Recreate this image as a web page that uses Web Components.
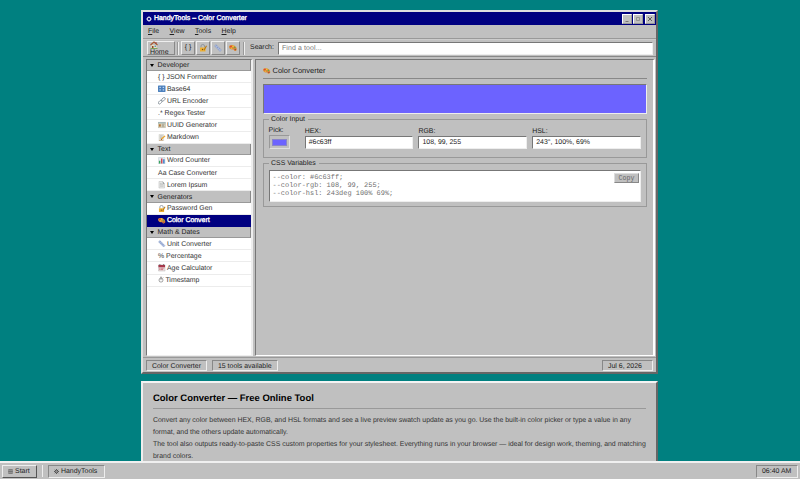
<!DOCTYPE html>
<html lang="en">
<head>
<meta charset="utf-8">
<title>HandyTools – Color Converter</title>
<style>
html, body {
  margin: 0;
  height: 100%;
  overflow: hidden;
}
body {
  background: #008080;
  color: #222;
  font: 6.95px/8px "Liberation Sans", Arial, sans-serif;
  text-rendering: geometricPrecision;
}
</style>
</head>
<body>
<handy-desktop>
  <tool-window>
    <color-converter></color-converter>
  </tool-window>
  <about-card heading="Color Converter — Free Online Tool">
    <p>Convert any color between HEX, RGB, and HSL formats and see a live preview swatch update as you go. Use the built-in color picker or type a value in any<br>format, and the others update automatically.</p>
    <p>The tool also outputs ready-to-paste CSS custom properties for your stylesheet. Everything runs in your browser — ideal for design work, theming, and matching<br>brand colors.</p>
  </about-card>
  <task-bar slot="taskbar"></task-bar>
</handy-desktop>

<script>
const icons = {
  gear: `<circle cx="8" cy="8" r="4.500" fill="none" stroke="currentColor" stroke-width="2.200"/><circle cx="8" cy="8" r="1.200" fill="currentColor"/><path d="M8 0v3M8 13v3M0 8h3M13 8h3M2.500 2.500l2 2M11.500 11.500l2 2M13.500 2.500l-2 2M4.500 11.500l-2 2" stroke="currentColor" stroke-width="1.800"/>`,
  home: `<path d="M3 8h10v7H3z" fill="#f3dfba"/><path d="M1 8l7-6 7 6" fill="none" stroke="#a85b32" stroke-width="2.400"/><path d="M11 2h2v4h-2z" fill="#944"/><path d="M4 10h3v5H4z" fill="#8b4b2b"/><path d="M9 9h3v3H9z" fill="#4a9ac8"/><path d="M1 15h14" stroke="#6a9b45" stroke-width="1.600"/>`,
  lock: `<path d="M4 7V4q0-3 3.500-3T11 4v3" fill="none" stroke="#8a9298" stroke-width="1.800"/><path d="M2 7h11v8H2z" fill="#edb035"/><path d="M9 12l5-9 2 1-5 9z" fill="#b87912"/><circle cx="7" cy="11" r="1.300" fill="#76511a"/>`,
  ruler: `<path d="M1 4l3-3 11 11-3 3z" fill="#a9b9df" stroke="#7b8fbd" stroke-width=".7"/><path d="M5 3L3.500 4.500M8 6L6.500 7.500M11 9l-1.500 1.500" stroke="#546b9e"/>`,
  palette: `<path d="M0 5C1 1 9 1 13 5c4 4 3 9-1 9-3 0-1-3-4-3-5 1-8-2-8-6z" fill="#d98a3a"/><circle cx="4" cy="5" r="1.700" fill="#e8362f"/><circle cx="8" cy="4.500" r="1.600" fill="#f7d737"/><circle cx="11.500" cy="7" r="1.500" fill="#5fae47"/><circle cx="5" cy="8.500" r="1.500" fill="#e9c13b"/><circle cx="12.500" cy="11" r="1.500" fill="#a4413c"/>`,
  numbers: `<rect x="0" y="1" width="16" height="14" rx="1" fill="#4d81bd"/><path d="M3 5h3M10 5h3M3 10.500h3M10 10.500h3" stroke="#e4f0ff" stroke-width="2"/>`,
  link: `<g fill="none" stroke="#7f8b94" stroke-width="1.800"><rect x="7" y="2.500" width="9" height="5" rx="2.500" transform="rotate(-45 11.500 5)"/><rect x="0" y="8.500" width="9" height="5" rx="2.500" transform="rotate(-45 4.500 11)"/></g>`,
  card: `<path d="M0 3h16v11H0z" fill="#ded8bd" stroke="#9e9b88" stroke-width=".8"/><path d="M0 3h16v2H0z" fill="#89a9b7"/><path d="M2 7h4v5H2z" fill="#b3763c"/><path d="M8 7h6M8 9.500h5M8 12h6" stroke="#777"/>`,
  memo: `<path d="M2 1h10v14H2z" fill="#e5e5df" stroke="#b7b7ae" stroke-width=".6"/><path d="M4 4h6M4 7h5M4 10h3" stroke="#999"/><path d="M6 13l1-4 7-6 2 2-7 6z" fill="#eaa32c"/><path d="M6 13l1-3 2 2z" fill="#85472b"/><path d="M2 14h9v1H2z" fill="#c58b45"/>`,
  chart: `<path d="M1 1h14v14H1z" fill="#e4ebef" stroke="#a9b8c2" stroke-width=".7"/><path d="M2 8h3v6H2z" fill="#35a35b"/><path d="M6.500 3h3v11h-3z" fill="#cf4352"/><path d="M11 5h3v9h-3z" fill="#337dcc"/>`,
  page: `<path d="M2 1h8l4 5v9H2z" fill="#e9ebe9" stroke="#999" stroke-width=".7"/><path d="M10 1v5h4z" fill="#8b9295"/><path d="M4 5h4M4 8h8M4 11h8" stroke="#999"/>`,
  calendar: `<path d="M1 2h14v13H1z" fill="#eee3e3" stroke="#999" stroke-width=".7"/><path d="M1 2h14v5H1z" fill="#a9374a"/><path d="M4 0v3M12 0v3" stroke="#555" stroke-width="1.500"/><path d="M3 9h10M3 12h8" stroke="#bc3e50" stroke-width="1.800" stroke-dasharray="2 1"/>`,
  timer: `<circle cx="8" cy="9" r="5.300" fill="none" stroke="#444" stroke-width="1.300"/><path d="M8 9V5M6 1h4M8 1v3M12 4l2-2" stroke="#444" stroke-width="1.300"/>`,
  start: `<path d="M1.500 1.500h13v13h-13zM8 1v14M1 8h14M4.700 1v14M11.300 1v14" fill="none" stroke="#444" stroke-width="1.200"/>`
};

class ToolIcon extends HTMLElement {
  constructor() {
    super();
    this.attachShadow({ mode: "open" });
    this.shadowRoot.innerHTML = `
      <style>
        :host { display: inline-block; width: 8px; height: 8px; flex: none; }
        svg { display: block; width: 100%; height: 100%; }
      </style>
      <svg viewBox="0 0 16 16">${icons[this.getAttribute("name")]}</svg>`;
  }
}
customElements.define("tool-icon", ToolIcon);

class HandyDesktop extends HTMLElement {
  constructor() {
    super();
    this.attachShadow({ mode: "open" });
    this.shadowRoot.innerHTML = `
      <style>
        :host { display: flex; flex-direction: column; height: 479px; overflow: hidden; }
        main {
          flex: 1; min-height: 0; overflow: hidden;
          display: flex; flex-direction: column; align-items: center; gap: 7px;
          padding-top: 10px;
        }
      </style>
      <main><slot></slot></main>
      <slot name="taskbar"></slot>`;
  }
}
customElements.define("handy-desktop", HandyDesktop);

class SideGroup extends HTMLElement {
  constructor() {
    super();
    this.attachShadow({ mode: "open" });
    this.shadowRoot.innerHTML = `
      <style>
        :host { display: block; }
        header {
          box-sizing: border-box; height: 11.300px; padding-left: 3px;
          display: flex; align-items: center; gap: 3.600px;
          background: #c0c0c0; border-bottom: 1px solid #999; border-right: 1px solid #888;
        }
        i { border: 2px solid transparent; border-top: 3.500px solid #000; border-bottom: 0; }
        span { padding-top: 2px; }
      </style>
      <header><i></i><span>${this.getAttribute("label")}</span></header>
      <slot></slot>`;
  }
}
customElements.define("side-group", SideGroup);

class SideItem extends HTMLElement {
  constructor() {
    super();
    this.attachShadow({ mode: "open" });
    const icon = this.getAttribute("icon");
    this.shadowRoot.innerHTML = `
      <style>
        :host {
          box-sizing: border-box; height: 12.100px; padding-left: 11px;
          display: flex; align-items: center; gap: 1.400px;
          border-bottom: 1px solid #ececec; color: #333; white-space: nowrap;
        }
        :host([active]) { background: #000080; border-color: #000080; color: #fff; -webkit-text-stroke: .35px #fff; }
        tool-icon { width: 7.500px; height: 7.500px; }
        tool-icon[name="timer"] { width: 6px; }
        span { padding-top: 1.500px; }
      </style>
      ${icon ? `<tool-icon name="${icon}"></tool-icon>` : ""}<span><slot></slot></span>`;
  }
}
customElements.define("side-item", SideItem);

class ToolWindow extends HTMLElement {
  constructor() {
    super();
    this.attachShadow({ mode: "open" });
    this.shadowRoot.innerHTML = `
      <style>
        :host {
          box-sizing: border-box; flex: none; width: 517px; height: 364px;
          display: flex; flex-direction: column; background: #c0c0c0;
          border: 2px solid; border-color: #dfdfdf #666 #666 #dfdfdf;
          margin-right: 1px;
        }
        .title {
          height: 13px; padding: 0 1px 0 3px; background: #000080; color: #fff;
          display: flex; align-items: center; gap: 2px;
        }
        .title tool-icon { width: 6px; height: 6px; }
        .title b { flex: 1; font-weight: normal; -webkit-text-stroke: .35px #fff; }
        .ctl {
          box-sizing: border-box; width: 10px; height: 10px; margin-left: -.300px;
          background: #c0c0c0; border: 1px solid; border-color: #fff #999 #999 #fff;
        }
        .ctl svg { display: block; width: 8px; height: 8px; }
        .menu {
          box-sizing: border-box; height: 14px; padding-left: 5px; border-bottom: 1px solid #999;
          display: flex; align-items: center; gap: 10.400px;
        }
        .tools {
          box-sizing: border-box; height: 18px; padding: 0 3px 0 4px; border-bottom: 1px solid #888;
          border-top: 1px solid #ccc;
          display: flex; align-items: center;
        }
        .btn {
          box-sizing: border-box; width: 14px; height: 14px; margin-right: 1px;
          display: flex; align-items: center; justify-content: center;
          border: 1px solid; border-color: #eee #888 #888 #eee;
        }
        .home { width: 28px; flex-direction: column; align-items: flex-start; justify-content: flex-start; padding-left: 2px; margin: 0; }
        .home tool-icon { flex: none; margin-top: -1px; }
        .home span { line-height: 8px; }
        .sep { width: 1px; height: 13px; background: #999; border-right: 1px solid #eee; margin: 0 2px; }
        .search {
          box-sizing: border-box; flex: 1; height: 13px; margin-left: 4px; padding: 1px 3px 0; background: #fff;
          border: 1px solid; border-color: #777 #eee #eee #777; line-height: 10px; color: #777; letter-spacing: .13px;
        }
        .body { flex: 1; min-height: 0; display: flex; gap: 2px; padding: 2px 1px 1px 3px; }
        nav {
          box-sizing: border-box; flex: none; width: 107px; background: #fff;
          border: 1px solid; border-color: #777 #eee #eee #777; border-right-width: 2px;
        }
        section {
          box-sizing: border-box; flex: 1; min-width: 0; padding: 4px 6px 0 7px;
          border: 1px solid; border-color: #777 #fff #fff #777; border-width: 1px 2px 1px 1px;
        }
        footer {
          box-sizing: border-box; height: 15px; padding: 1px 3px 1px 3px; border-top: 1px solid #999;
          display: flex; align-items: center; gap: 5px;
        }
        footer span {
          box-sizing: border-box; height: 11px; padding: 0 5px; line-height: 11px;
          border: 1px solid; border-color: #888 #eee #eee #888;
        }
        footer span:last-child { width: 51px; margin-left: auto; }
      </style>
      <div class="title">
        <tool-icon name="gear"></tool-icon><b>HandyTools – Color Converter</b>
        <span class="ctl"><svg viewBox="0 0 8 8"><path d="M2.500 6.500h3" stroke="#777"/></svg></span>
        <span class="ctl"><svg viewBox="0 0 8 8"><path d="M2.500 2.500h3v3h-3z" fill="none" stroke="#888" stroke-width=".8"/></svg></span>
        <span class="ctl"><svg viewBox="0 0 8 8"><path d="M2 2l4 4M6 2l-4 4" stroke="#444" stroke-width=".8"/></svg></span>
      </div>
      <div class="menu"><span><u>F</u>ile</span><span><u>V</u>iew</span><span><u>T</u>ools</span><span><u>H</u>elp</span></div>
      <div class="tools">
        <div class="btn home"><tool-icon name="home"></tool-icon><span>Home</span></div>
        <i class="sep"></i>
        <div class="btn">{ }</div>
        <div class="btn"><tool-icon name="lock"></tool-icon></div>
        <div class="btn"><tool-icon name="ruler"></tool-icon></div>
        <div class="btn"><tool-icon name="palette"></tool-icon></div>
        <i class="sep"></i>
        <span style="margin-left:3px">Search:</span>
        <div class="search">Find a tool...</div>
      </div>
      <div class="body">
        <nav>
          <side-group label="Developer">
            <side-item>{ } JSON Formatter</side-item>
            <side-item icon="numbers">Base64</side-item>
            <side-item icon="link">URL Encoder</side-item>
            <side-item>.* Regex Tester</side-item>
            <side-item icon="card">UUID Generator</side-item>
            <side-item icon="memo">Markdown</side-item>
          </side-group>
          <side-group label="Text">
            <side-item icon="chart">Word Counter</side-item>
            <side-item>Aa Case Converter</side-item>
            <side-item icon="page">Lorem Ipsum</side-item>
          </side-group>
          <side-group label="Generators">
            <side-item icon="lock">Password Gen</side-item>
            <side-item icon="palette" active>Color Convert</side-item>
          </side-group>
          <side-group label="Math &amp; Dates">
            <side-item icon="ruler">Unit Converter</side-item>
            <side-item>% Percentage</side-item>
            <side-item icon="calendar">Age Calculator</side-item>
            <side-item icon="timer">Timestamp</side-item>
          </side-group>
        </nav>
        <section><slot></slot></section>
      </div>
      <footer><span>Color Converter</span><span>15 tools available</span><span>Jul 6, 2026</span></footer>`;
  }
}
customElements.define("tool-window", ToolWindow);

class GroupBox extends HTMLElement {
  constructor() {
    super();
    this.attachShadow({ mode: "open" });
    this.shadowRoot.innerHTML = `
      <style>
        :host { display: block; }
        fieldset {
          box-sizing: border-box; height: 100%; margin: 0; padding: 0 5px 0 4.500px; min-width: 0;
          border: 1px solid #999;
        }
        legend { padding: 0 3px 0 2.500px; height: 8px; line-height: 9px; }
      </style>
      <fieldset><legend>${this.getAttribute("label")}</legend><slot></slot></fieldset>`;
  }
}
customElements.define("group-box", GroupBox);

class ColorConverter extends HTMLElement {
  constructor() {
    super();
    this.attachShadow({ mode: "open" });
    this.shadowRoot.innerHTML = `
      <style>
        :host { display: block; }
        h2 {
          margin: 0; height: 13px; padding-bottom: 1px; border-bottom: 1px solid #888;
          display: flex; align-items: center; gap: 2px; font-size: 7.500px; font-weight: normal;
        }
        h2 tool-icon { width: 7.500px; }
        h2 span { padding-top: 1px; }
        .swatch {
          box-sizing: border-box; height: 30px; margin: 5px 0 1px; background: #6c63ff;
          border: 1px solid; border-color: #777 #eee #eee #777;
        }
        .input { height: 43px; }
        .css { height: 48px; margin-top: 1px; }
        .row { display: grid; grid-template-columns: 31.200px 1fr 1fr 1fr; column-gap: 5px; padding-top: 4px; }
        label { display: block; }
        label:not(.pick) { padding-top: 1px; }
        .field {
          box-sizing: border-box; height: 13px; padding: 1px 3px 0; background: #fff;
          border: 1px solid; border-color: #777 #eee #eee #777; line-height: 10px;
        }
        .chip {
          box-sizing: border-box; width: 21px; height: 14px; padding: 3px 2px 2px;
          border: 1px solid; border-color: #999 #e0e0e0 #e0e0e0 #999;
        }
        .chip i { display: block; box-sizing: border-box; width: 15px; height: 7px; background: #6c63ff; border: 1px solid #8985c8; }
        .code {
          box-sizing: border-box; height: 32px; margin-top: 3px; padding: 3px 1px 0 3px; background: #fff;
          border: 1px solid; border-color: #777 #eee #eee #777;
          display: flex; justify-content: space-between; align-items: flex-start;
          font-family: "Liberation Mono", "Courier New", monospace; color: #707070;
        }
        pre { margin: 0; font: inherit; }
        button {
          width: 25px; height: 10px; margin: -1px 0 0; padding: 0; background: #c0c0c0; color: #666;
          border: 1px solid; border-color: #ddd #888 #888 #ddd; font: inherit; font-size: 6.600px; line-height: 7px;
        }
      </style>
      <h2><tool-icon name="palette"></tool-icon><span>Color Converter</span></h2>
      <div class="swatch"></div>
      <group-box class="input" label="Color Input">
        <div class="row">
          <label class="pick">Pick:<div class="chip"><i></i></div></label>
          <label>HEX:<div class="field">#6c63ff</div></label>
          <label>RGB:<div class="field">108, 99, 255</div></label>
          <label>HSL:<div class="field">243°, 100%, 69%</div></label>
        </div>
      </group-box>
      <group-box class="css" label="CSS Variables">
        <div class="code"><pre>--color: #6c63ff;
--color-rgb: 108, 99, 255;
--color-hsl: 243deg 100% 69%;</pre><button>Copy</button></div>
      </group-box>`;
  }
}
customElements.define("color-converter", ColorConverter);

class AboutCard extends HTMLElement {
  constructor() {
    super();
    this.attachShadow({ mode: "open" });
    this.shadowRoot.innerHTML = `
      <style>
        :host {
          box-sizing: border-box; flex: none; width: 517px; height: 100px; padding: 10px 10px 0;
          background: #c0c0c0; border: 2px solid; border-color: #f4f4f4 #666 #666 #eee; margin-right: 1px;
        }
        h1 { margin: 0 0 6px; height: 15px; border-bottom: 1px solid #999; font-size: 9.470px; line-height: 12px; color: #000; }
        ::slotted(p) { margin: 0; line-height: 11.900px; white-space: nowrap; color: #333; }
      </style>
      <h1>${this.getAttribute("heading")}</h1>
      <slot></slot>`;
  }
}
customElements.define("about-card", AboutCard);

class TaskBar extends HTMLElement {
  constructor() {
    super();
    this.attachShadow({ mode: "open" });
    this.shadowRoot.innerHTML = `
      <style>
        :host {
          box-sizing: border-box; height: 18px; padding: 0 2px; background: #c0c0c0;
          border-top: 2px solid #f0f0f0; display: flex; align-items: center;
        }
        div {
          box-sizing: border-box; height: 13px; padding: 0 5px; display: flex; align-items: center; gap: 2px;
          border: 1px solid; border-color: #888 #eee #eee #888;
        }
        span { padding-top: 1px; }
        .start { width: 35px; border-color: #eee #555 #555 #eee; }
        .sep { width: 1px; height: 12px; background: #eee; margin: 0 5px; }
        .app { width: 57px; }
        .clock { margin-left: auto; width: 42px; }
        tool-icon { width: 5px; height: 5px; }
      </style>
      <div class="start"><tool-icon name="start"></tool-icon><span>Start</span></div>
      <i class="sep"></i>
      <div class="app"><tool-icon name="gear"></tool-icon><span>HandyTools</span></div>
      <div class="clock"><span>06:40 AM</span></div>`;
  }
}
customElements.define("task-bar", TaskBar);
</script>
</body>
</html>
